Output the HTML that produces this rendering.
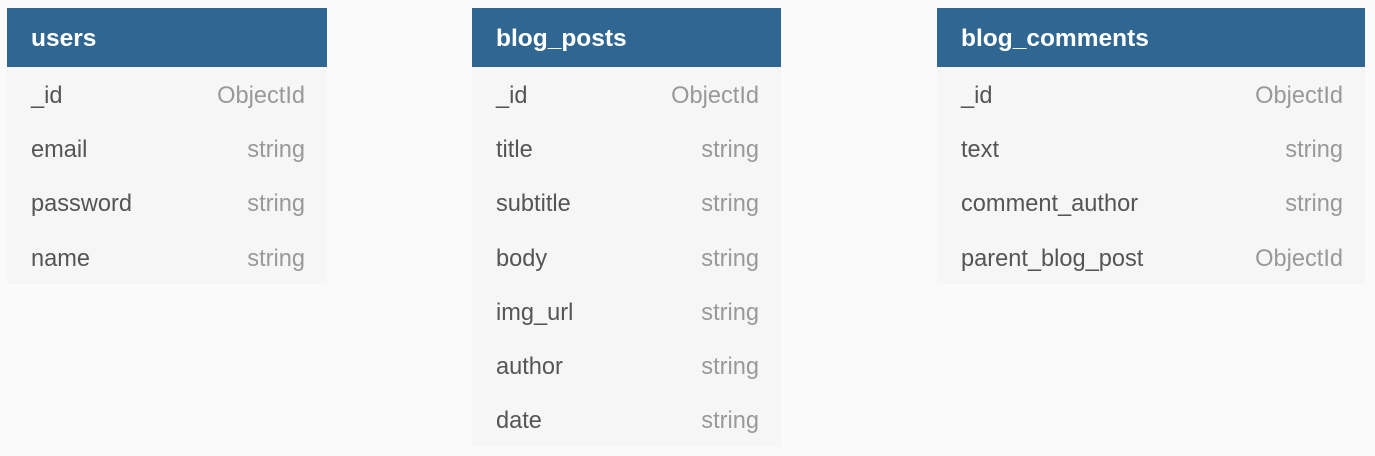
<!DOCTYPE html>
<html><head><style>
body{margin:0;width:1375px;height:456px;background:#fafafa;font-family:"Liberation Sans","DejaVu Sans",sans-serif;position:relative;overflow:hidden}
.t{position:absolute;top:8px;background:#f6f6f6}
.h{height:59px;background:#306792;color:#fff;font-weight:bold;font-size:24.5px;line-height:62px;padding-left:24px;box-sizing:border-box}
.r{height:54.3px;display:flex;justify-content:space-between;align-items:center;padding:4px 22px 0 24px;box-sizing:border-box;font-size:23.6px;color:#555}
.r span:last-child{color:#999}
</style></head><body>
<div class="t" style="left:7px;width:320px">
<div class="h">users</div>
<div class="r"><span>_id</span><span>ObjectId</span></div>
<div class="r"><span>email</span><span>string</span></div>
<div class="r"><span>password</span><span>string</span></div>
<div class="r"><span>name</span><span>string</span></div>
</div>
<div class="t" style="left:472px;width:309px">
<div class="h">blog_posts</div>
<div class="r"><span>_id</span><span>ObjectId</span></div>
<div class="r"><span>title</span><span>string</span></div>
<div class="r"><span>subtitle</span><span>string</span></div>
<div class="r"><span>body</span><span>string</span></div>
<div class="r"><span>img_url</span><span>string</span></div>
<div class="r"><span>author</span><span>string</span></div>
<div class="r"><span>date</span><span>string</span></div>
</div>
<div class="t" style="left:937px;width:428px">
<div class="h">blog_comments</div>
<div class="r"><span>_id</span><span>ObjectId</span></div>
<div class="r"><span>text</span><span>string</span></div>
<div class="r"><span>comment_author</span><span>string</span></div>
<div class="r"><span>parent_blog_post</span><span>ObjectId</span></div>
</div>
</body></html>
